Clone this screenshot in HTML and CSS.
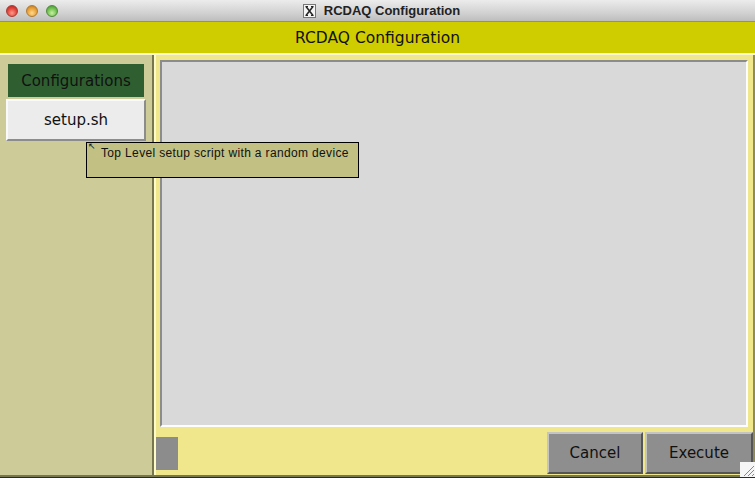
FILE: index.html
```html
<!DOCTYPE html>
<html>
<head>
<meta charset="utf-8">
<link rel="stylesheet" href="styles.css">
</head>
<body>
<div class="window">
  <div class="titlebar">
    <div class="lights">
      <span class="light red"></span>
      <span class="light orange"></span>
      <span class="light green"></span>
    </div>
    <div class="wtitle">
      <svg class="xicon" width="13" height="14" viewBox="0 0 13 14">
        <rect x="0.5" y="0.5" width="12" height="13" fill="#f4f4f4" stroke="#777"/>
        <path d="M3 2.5 L10 11.5 M10 2.5 L3 11.5" stroke="#222" stroke-width="1.5"/>
        <path d="M2.5 2.5 H5 M8 2.5 H10.5 M2.5 11.5 H5 M8 11.5 H10.5" stroke="#222" stroke-width="1"/>
      </svg>
      <span>RCDAQ Configuration</span>
    </div>
  </div>
  <div class="header">RCDAQ Configuration</div>
  <div class="main">
    <div class="left">
      <div class="cfg-label">Configurations</div>
      <div class="cfg-btn">setup.sh</div>
    </div>
    <div class="right">
      <div class="textarea"></div>
      <div class="bottom">
        <div class="square"></div>
        <div class="spacer"></div>
        <div class="btn cancel">Cancel</div>
        <div class="btn execute">Execute</div>
      </div>
    </div>
  </div>
  <div class="tooltip"><span class="cursor">&#8598;</span>Top Level setup script with a random device</div>
  <svg class="grip" width="15" height="15" viewBox="0 0 15 15">
    <rect width="15" height="15" fill="#f6f6f6"/>
    <path d="M14 4 L4 14 M14 8 L8 14 M14 12 L12 14" stroke="#888" stroke-width="1"/>
  </svg>
</div>
</body>
</html>
```
FILE: styles.css
```css
html, body {
  margin: 0;
  padding: 0;
}
body {
  width: 755px;
  height: 478px;
  overflow: hidden;
  background: #2a2a2a;
  font-family: "DejaVu Sans", sans-serif;
}
.window {
  position: relative;
  width: 755px;
  height: 478px;
  display: flex;
  flex-direction: column;
}
.titlebar {
  height: 22px;
  background: linear-gradient(#ececec, #d2d2d2 60%, #bdbdbd);
  display: flex;
  align-items: center;
  position: relative;
  box-sizing: border-box;
  border-bottom: 1px solid #8e8e8e;
}
.lights {
  display: flex;
  gap: 8px;
  padding-left: 6px;
}
.light {
  width: 12px;
  height: 12px;
  border-radius: 50%;
  box-sizing: border-box;
}
.red { background: radial-gradient(circle at 50% 70%, #ff9a8a, #e0443a 55%, #a8221c); border: 1px solid #a83a32; }
.orange { background: radial-gradient(circle at 50% 70%, #ffd98a, #e8a03a 55%, #b0701c); border: 1px solid #b07a32; }
.green { background: radial-gradient(circle at 50% 70%, #c8f0a0, #70c050 55%, #3f8a2c); border: 1px solid #4f8a3c; }
.wtitle {
  position: absolute;
  left: 0;
  right: 0;
  top: 0;
  height: 21px;
  display: flex;
  justify-content: center;
  align-items: center;
  gap: 8px;
  font-family: "Liberation Sans", sans-serif;
  font-weight: bold;
  font-size: 13px;
  color: #222;
  padding-left: 8px;
}
.header {
  height: 31px;
  background: #cfcd00;
  border-bottom: 2px solid #fbf8d0;
  display: flex;
  align-items: center;
  justify-content: center;
  font-size: 15.5px;
  color: #111;
  flex: none;
}
.main {
  flex: 1;
  display: flex;
  border-bottom: 2px solid #77774f;
  margin-bottom: 1px;
}
.left {
  width: 152px;
  background: #cdcc99;
  border-right: 2px solid #77774f;
  padding-top: 9px;
  display: flex;
  flex-direction: column;
  gap: 2px;
}
.cfg-label {
  margin: 0 8px;
  height: 33px;
  background: #2f5f30;
  color: #111;
  font-size: 15px;
  display: flex;
  align-items: center;
  justify-content: center;
}
.cfg-btn {
  margin: 0 6px;
  height: 42px;
  box-sizing: border-box;
  background: #ececec;
  border: 2px solid;
  border-color: #fafafa #8c8c8c #8c8c8c #fafafa;
  color: #111;
  font-size: 15px;
  display: flex;
  align-items: center;
  justify-content: center;
}
.right {
  flex: 1;
  background: #f0e68c;
  border-left: 2px solid #fffbc8;
  border-right: 2px solid #8f8a5a;
  display: flex;
  flex-direction: column;
  padding-top: 5px;
}
.textarea {
  height: 367px;
  box-sizing: border-box;
  margin: 0 5px 0 4px;
  background: #d9d9d9;
  border: 2px solid;
  border-color: #8c8c8c #fdfdfd #fdfdfd #8c8c8c;
}
.bottom {
  display: flex;
  align-items: flex-start;
  margin-top: 5px;
}
.square {
  width: 22px;
  height: 33px;
  margin-top: 5px;
  background: #8c8c8c;
}
.spacer { flex: 1; }
.btn {
  height: 42px;
  box-sizing: border-box;
  background: #8e8e8e;
  border: 2px solid;
  border-color: #c4c4c4 #555 #555 #c4c4c4;
  font-size: 15px;
  color: #111;
  display: flex;
  align-items: center;
  justify-content: center;
}
.cancel { width: 96px; margin-right: 2px; }
.execute { width: 108px; }
.tooltip {
  position: absolute;
  left: 86px;
  top: 142px;
  width: 273px;
  height: 36px;
  box-sizing: border-box;
  background: #c2c083;
  border: 1px solid #000;
  font-family: "Liberation Sans", sans-serif;
  font-size: 12px;
  letter-spacing: 0.35px;
  color: #111;
  padding: 3px 0 0 14px;
}
.cursor {
  position: absolute;
  left: 1px;
  top: -2px;
  font-size: 9px;
}
.grip {
  position: absolute;
  left: 740px;
  top: 462px;
}
```
